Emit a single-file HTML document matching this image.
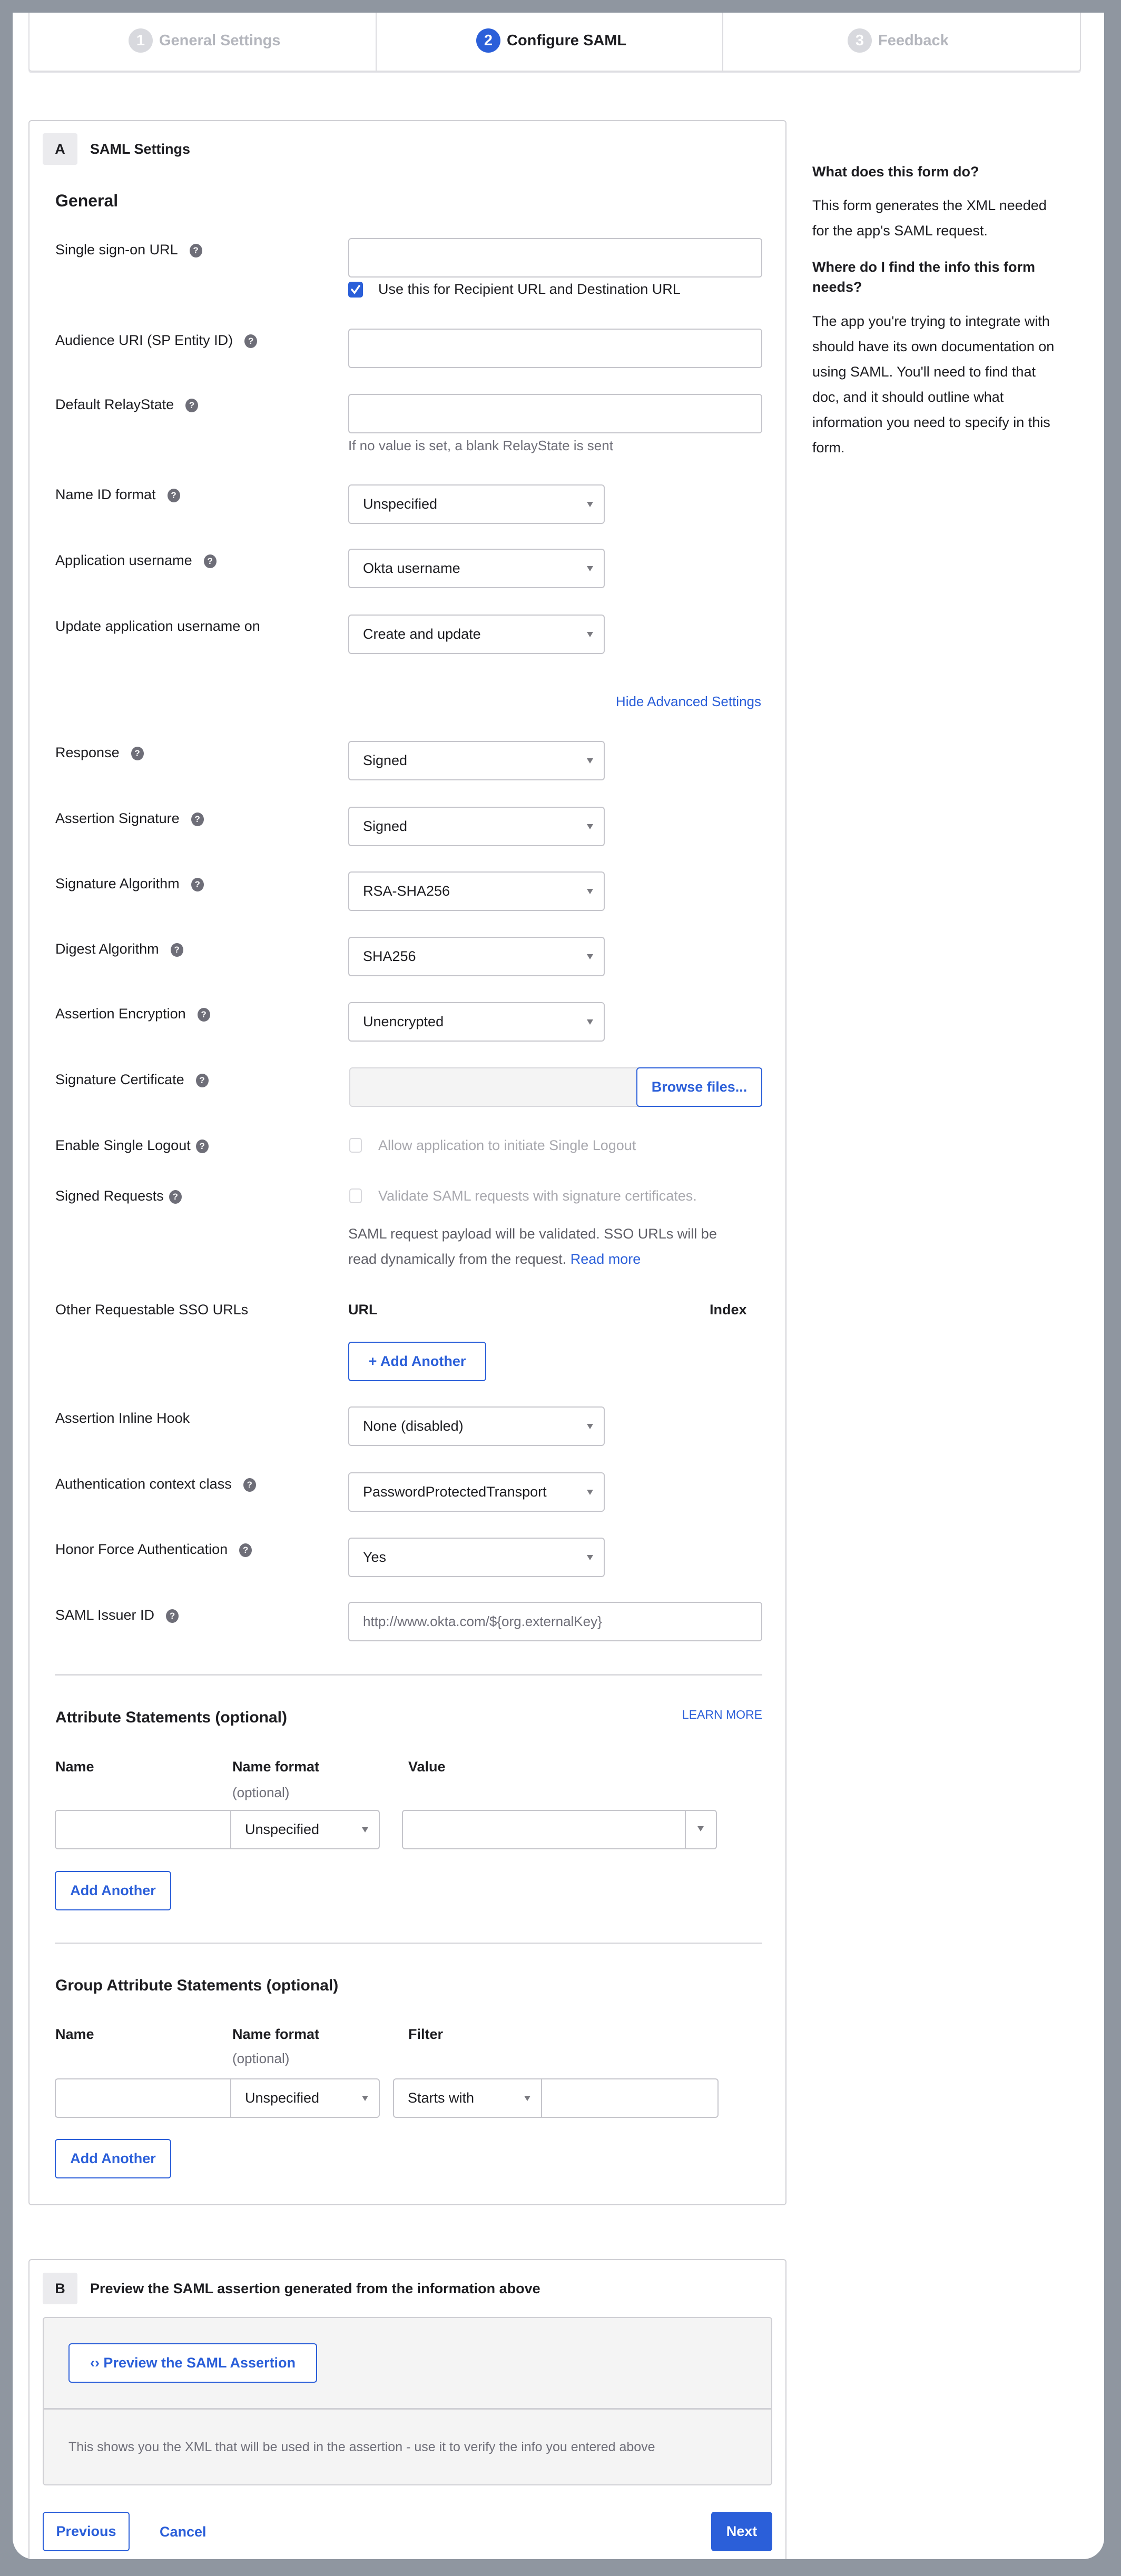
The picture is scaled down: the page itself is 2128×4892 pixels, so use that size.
<!DOCTYPE html>
<html style="overflow:hidden;height:4892px"><head><meta charset="utf-8"><style>
*{box-sizing:border-box;margin:0;padding:0}
body{width:2128px;height:4892px;background:#8f96a0;font-family:"Liberation Sans",sans-serif;color:#1d1d21;position:relative;overflow:hidden}
.panel{position:absolute;left:24px;top:24px;width:2072px;height:4836px;background:#fff;border-radius:0 0 40px 40px;overflow:hidden}
.a{position:absolute;white-space:nowrap}
.lb{position:absolute;left:81px;font-size:27px;line-height:38px;white-space:nowrap}
.q{display:inline-block;width:24px;height:26px;border-radius:50%;background:#6e6e78;color:#fff;font-size:17px;font-weight:bold;text-align:center;line-height:26px;vertical-align:2px;margin-left:22px}
.in{position:absolute;border:2px solid #c5c5cb;border-radius:6px;background:#fff;height:75px}
.sel{position:absolute;border:2px solid #c5c5cb;border-radius:6px;background:#fff;height:75px;font-size:27px;line-height:71px;padding-left:26px;white-space:nowrap}
.sel::after{content:"";position:absolute;right:20px;top:31px;border-left:6px solid transparent;border-right:6px solid transparent;border-top:10px solid #7a7a80}
.btn{position:absolute;border:2px solid #2b5fd9;border-radius:6px;color:#2b5fd9;font-weight:bold;font-size:27px;text-align:center;line-height:71px;height:75px;background:#fff;white-space:nowrap}
.blue{color:#2b5fd9}
.hr{position:absolute;height:3px;background:#dcdce0}
.cb{position:absolute;width:24px;height:28px;border-radius:5px;border:2px solid #d8d8dc;background:#fff}
</style></head><body>
<div class="panel">
<div class="a" style="left:30px;top:0;width:1998px;height:112px;border:2px solid #dcdce0;border-top:none;border-radius:0 0 6px 6px;box-shadow:0 3px 0 #e6e6ea"></div>
<div class="a" style="left:689px;top:0;width:2px;height:110px;background:#dcdce0"></div>
<div class="a" style="left:1347px;top:0;width:2px;height:110px;background:#dcdce0"></div>
<div class="a" style="left:220px;top:30px;font-size:29px;font-weight:bold;color:#b4b6bd;line-height:46px"><span style="display:inline-block;width:46px;height:46px;border-radius:50%;background:#d8d9de;color:#fff;text-align:center;margin-right:12px">1</span>General Settings</div>
<div class="a" style="left:880px;top:30px;font-size:29px;font-weight:bold;color:#1d1d21;line-height:46px"><span style="display:inline-block;width:46px;height:46px;border-radius:50%;background:#2b5fd9;color:#fff;text-align:center;margin-right:12px">2</span>Configure SAML</div>
<div class="a" style="left:1585px;top:30px;font-size:29px;font-weight:bold;color:#b4b6bd;line-height:46px"><span style="display:inline-block;width:46px;height:46px;border-radius:50%;background:#d8d9de;color:#fff;text-align:center;margin-right:12px">3</span>Feedback</div>

<div class="a" style="left:1518px;top:278px;font-size:27px;line-height:48px">
<div style="font-weight:bold">What does this form do?</div>
<div style="margin-top:16px">This form generates the XML needed<br>for the app's SAML request.</div>
<div style="font-weight:bold;line-height:38px;margin-top:26px">Where do I find the info this form<br>needs?</div>
<div style="margin-top:22px">The app you're trying to integrate with<br>should have its own documentation on<br>using SAML. You'll need to find that<br>doc, and it should outline what<br>information you need to specify in this<br>form.</div>
</div>
</div>

<div class="a" style="left:54px;top:228px;width:1439px;height:3960px;border:2px solid #d0d0d5;border-radius:6px;background:#fff"></div>
<div class="a" style="left:81px;top:253px;width:66px;height:60px;background:#ebebee;border-radius:4px;font-size:27px;font-weight:bold;text-align:center;line-height:60px">A</div>
<div class="a" style="left:171px;top:264px;font-size:27px;font-weight:bold;line-height:38px">SAML Settings</div>
<div class="a" style="left:105px;top:360px;font-size:32px;font-weight:bold;line-height:42px">General</div>

<div class="lb" style="left:105px;top:455px">Single sign-on URL<span class="q">?</span></div>
<div class="in" style="left:661px;top:452px;width:786px"></div>
<div class="a" style="left:661px;top:535px;width:28px;height:30px;border-radius:5px;background:#2b5fd9"><svg width="28" height="30" viewBox="0 0 28 30"><path d="M7 15 L12 21 L21 8" stroke="#fff" stroke-width="3.5" fill="none" stroke-linecap="round"/></svg></div>
<div class="a" style="left:718px;top:530px;font-size:27px;line-height:38px">Use this for Recipient URL and Destination URL</div>

<div class="lb" style="left:105px;top:627px">Audience URI (SP Entity ID)<span class="q">?</span></div>
<div class="in" style="left:661px;top:624px;width:786px"></div>

<div class="lb" style="left:105px;top:749px">Default RelayState<span class="q">?</span></div>
<div class="in" style="left:661px;top:748px;width:786px"></div>
<div class="a" style="left:661px;top:827px;font-size:26px;line-height:38px;color:#6e6e78">If no value is set, a blank RelayState is sent</div>

<div class="lb" style="left:105px;top:920px">Name ID format<span class="q">?</span></div>
<div class="sel" style="left:661px;top:920px;width:487px">Unspecified</div>
<div class="lb" style="left:105px;top:1045px">Application username<span class="q">?</span></div>
<div class="sel" style="left:661px;top:1042px;width:487px">Okta username</div>
<div class="lb" style="left:105px;top:1170px">Update application username on</div>
<div class="sel" style="left:661px;top:1167px;width:487px">Create and update</div>

<div class="a blue" style="right:683px;top:1313px;font-size:26px;line-height:38px">Hide Advanced Settings</div>

<div class="lb" style="left:105px;top:1410px">Response<span class="q">?</span></div>
<div class="sel" style="left:661px;top:1407px;width:487px">Signed</div>
<div class="lb" style="left:105px;top:1535px">Assertion Signature<span class="q">?</span></div>
<div class="sel" style="left:661px;top:1532px;width:487px">Signed</div>
<div class="lb" style="left:105px;top:1659px">Signature Algorithm<span class="q">?</span></div>
<div class="sel" style="left:661px;top:1655px;width:487px">RSA-SHA256</div>
<div class="lb" style="left:105px;top:1783px">Digest Algorithm<span class="q">?</span></div>
<div class="sel" style="left:661px;top:1779px;width:487px">SHA256</div>
<div class="lb" style="left:105px;top:1906px">Assertion Encryption<span class="q">?</span></div>
<div class="sel" style="left:661px;top:1903px;width:487px">Unencrypted</div>

<div class="lb" style="left:105px;top:2031px">Signature Certificate<span class="q">?</span></div>
<div class="in" style="left:663px;top:2027px;width:784px;background:#f4f4f4;border-color:#d8d8dc"></div>
<div class="btn" style="left:1208px;top:2027px;width:239px">Browse files...</div>

<div class="lb" style="left:105px;top:2156px">Enable Single Logout<span class="q" style="margin-left:10px">?</span></div>
<div class="cb" style="left:663px;top:2161px"></div>
<div class="a" style="left:718px;top:2156px;font-size:27px;line-height:38px;color:#a8a8ae">Allow application to initiate Single Logout</div>

<div class="lb" style="left:105px;top:2252px">Signed Requests<span class="q" style="margin-left:10px">?</span></div>
<div class="cb" style="left:663px;top:2257px"></div>
<div class="a" style="left:718px;top:2252px;font-size:27px;line-height:38px;color:#a8a8ae">Validate SAML requests with signature certificates.</div>
<div class="a" style="left:661px;top:2319px;font-size:27px;line-height:48px;color:#5e5e66">SAML request payload will be validated. SSO URLs will be<br>read dynamically from the request. <span class="blue">Read more</span></div>

<div class="lb" style="left:105px;top:2468px">Other Requestable SSO URLs</div>
<div class="a" style="left:661px;top:2468px;font-size:27px;font-weight:bold;line-height:38px">URL</div>
<div class="a" style="left:1347px;top:2468px;font-size:27px;font-weight:bold;line-height:38px">Index</div>
<div class="btn" style="left:661px;top:2548px;width:262px">+ Add Another</div>

<div class="lb" style="left:105px;top:2674px">Assertion Inline Hook</div>
<div class="sel" style="left:661px;top:2671px;width:487px">None (disabled)</div>
<div class="lb" style="left:105px;top:2799px">Authentication context class<span class="q">?</span></div>
<div class="sel" style="left:661px;top:2796px;width:487px">PasswordProtectedTransport</div>
<div class="lb" style="left:105px;top:2923px">Honor Force Authentication<span class="q">?</span></div>
<div class="sel" style="left:661px;top:2920px;width:487px">Yes</div>
<div class="lb" style="left:105px;top:3048px">SAML Issuer ID<span class="q">?</span></div>
<div class="in" style="left:661px;top:3042px;width:786px;font-size:26px;line-height:71px;padding-left:26px;color:#6e6e78">http://www.okta.com/${org.externalKey}</div>

<div class="hr" style="left:104px;top:3179px;width:1343px"></div>
<div class="a" style="left:105px;top:3241px;font-size:30px;font-weight:bold;line-height:42px">Attribute Statements (optional)</div>
<div class="a blue" style="right:681px;top:3240px;font-size:23px;line-height:32px">LEARN MORE</div>
<div class="a" style="left:105px;top:3336px;font-size:27px;font-weight:bold;line-height:38px">Name</div>
<div class="a" style="left:441px;top:3336px;font-size:27px;font-weight:bold;line-height:38px">Name format</div>
<div class="a" style="left:441px;top:3385px;font-size:26px;line-height:38px;color:#6e6e78">(optional)</div>
<div class="a" style="left:775px;top:3336px;font-size:27px;font-weight:bold;line-height:38px">Value</div>
<div class="in" style="left:104px;top:3437px;width:336px;border-radius:6px 0 0 6px"></div>
<div class="sel" style="left:437px;top:3437px;width:284px;border-radius:0 6px 6px 0">Unspecified</div>
<div class="in" style="left:763px;top:3437px;width:598px"></div>
<div class="a" style="left:1300px;top:3439px;width:2px;height:71px;background:#c5c5cb"></div>
<div class="a" style="left:1324px;top:3468px;border-left:6px solid transparent;border-right:6px solid transparent;border-top:10px solid #7a7a80"></div>
<div class="btn" style="left:104px;top:3553px;width:221px">Add Another</div>

<div class="hr" style="left:104px;top:3689px;width:1343px"></div>
<div class="a" style="left:105px;top:3750px;font-size:30px;font-weight:bold;line-height:42px">Group Attribute Statements (optional)</div>
<div class="a" style="left:105px;top:3844px;font-size:27px;font-weight:bold;line-height:38px">Name</div>
<div class="a" style="left:441px;top:3844px;font-size:27px;font-weight:bold;line-height:38px">Name format</div>
<div class="a" style="left:441px;top:3890px;font-size:26px;line-height:38px;color:#6e6e78">(optional)</div>
<div class="a" style="left:775px;top:3844px;font-size:27px;font-weight:bold;line-height:38px">Filter</div>
<div class="in" style="left:104px;top:3947px;width:336px;border-radius:6px 0 0 6px"></div>
<div class="sel" style="left:437px;top:3947px;width:284px;border-radius:0 6px 6px 0">Unspecified</div>
<div class="sel" style="left:746px;top:3947px;width:283px;border-radius:6px 0 0 6px">Starts with</div>
<div class="in" style="left:1027px;top:3947px;width:337px;border-radius:0 6px 6px 0"></div>
<div class="btn" style="left:104px;top:4062px;width:221px">Add Another</div>

<div class="a" style="left:54px;top:4290px;width:1439px;height:570px;border:2px solid #d0d0d5;border-bottom:none;border-radius:6px 6px 0 0;background:#fff"></div>
<div class="a" style="left:81px;top:4316px;width:66px;height:60px;background:#ebebee;border-radius:4px;font-size:27px;font-weight:bold;text-align:center;line-height:60px">B</div>
<div class="a" style="left:171px;top:4327px;font-size:27px;font-weight:bold;line-height:38px">Preview the SAML assertion generated from the information above</div>
<div class="a" style="left:81px;top:4400px;width:1385px;height:320px;border:2px solid #cfcfd4;border-radius:6px;background:#f4f4f4"></div>
<div class="a" style="left:83px;top:4573px;width:1381px;height:3px;background:#cfcfd4"></div>
<div class="btn" style="left:130px;top:4450px;width:472px">‹› Preview the SAML Assertion</div>
<div class="a" style="left:130px;top:4628px;font-size:25px;line-height:38px;color:#6e6e78">This shows you the XML that will be used in the assertion - use it to verify the info you entered above</div>
<div class="btn" style="left:81px;top:4770px;width:165px">Previous</div>
<div class="a blue" style="left:303px;top:4789px;font-size:27px;font-weight:bold;line-height:38px">Cancel</div>
<div class="btn" style="left:1350px;top:4770px;width:116px;background:#2b5fd9;color:#fff">Next</div>

<div class="a" style="left:0;top:4860px;width:2128px;height:32px;background:#8f96a0"></div>
</body></html>
